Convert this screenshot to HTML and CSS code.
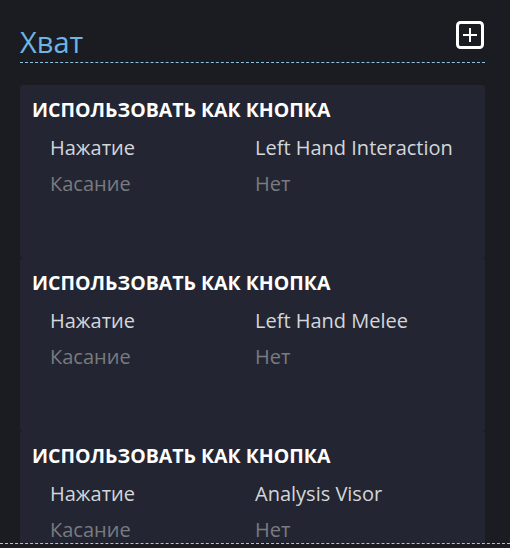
FILE: index.html
```html
<!DOCTYPE html>
<html>
<head>
    <meta http-equiv="Content-Type" content="text/html; charset=utf-8" />
    <title>Хват</title>
    <link rel="stylesheet" href="styles.css">
</head>

<body>
    <div class="frame">
        <section class="panel">
            <header class="panel-head">
                <h1 class="panel-title">Хват</h1>
                <button class="add-btn" title="Добавить">
                    <svg width="30" height="30" viewBox="0 0 30 30">
                        <rect x="2.5" y="2.5" width="25" height="25" rx="3" fill="none" stroke="#fff" stroke-width="3"></rect>
                        <path d="M15 8 V22 M8 15 H22" stroke="#fff" stroke-width="2" fill="none"></path>
                    </svg>
                </button>
            </header>
            <ul class="groups">
                <li class="group">
                    <h2>Использовать как кнопка</h2>
                    <div class="row"><span>Нажатие</span><span>Left Hand Interaction</span></div>
                    <div class="row muted"><span>Касание</span><span>Нет</span></div>
                </li>
                <li class="group">
                    <h2>Использовать как кнопка</h2>
                    <div class="row"><span>Нажатие</span><span>Left Hand Melee</span></div>
                    <div class="row muted"><span>Касание</span><span>Нет</span></div>
                </li>
                <li class="group">
                    <h2>Использовать как кнопка</h2>
                    <div class="row"><span>Нажатие</span><span>Analysis Visor</span></div>
                    <div class="row muted"><span>Касание</span><span>Нет</span></div>
                </li>
            </ul>
        </section>
    </div>
</body>

</html>
```

FILE: styles.css
```css
body {
    margin: 0;
    padding: 0;
    background: #1b1c21;
    font-family: "Open Sans", "Liberation Sans", Arial, sans-serif;
    color: #d3d6db;
}
.frame {
    height: 543px;
    overflow: hidden;
    border-bottom: 1px dashed #9fc9df;
}
.panel {
    padding: 20px 25px 0 20px;
}
.panel-head {
    display: flex;
    justify-content: space-between;
    align-items: flex-end;
    border-bottom: 1px dashed #8ec4e2;
}
.panel-title {
    margin: 0;
    padding-top: 2px;
    font-size: 29px;
    font-weight: normal;
    line-height: 40px;
    color: #6cb5e5;
}
.add-btn {
    margin: 0 0 12px 0;
    padding: 0;
    width: 30px;
    height: 30px;
    border: none;
    background: none;
    cursor: pointer;
}
.add-btn svg {
    display: block;
}
.groups {
    margin: 22px 0 0 0;
    padding: 0;
    list-style: none;
}
.group {
    height: 173px;
    box-sizing: border-box;
    padding: 13px 12px 0 12px;
    background: #232632;
    border-radius: 3px;
}
.group h2 {
    margin: 0;
    font-size: 19.5px;
    line-height: 24px;
    font-weight: bold;
    text-transform: uppercase;
    color: #fff;
}
.row {
    display: grid;
    grid-template-columns: 205px 1fr;
    padding-left: 18px;
    font-size: 20px;
    line-height: 36px;
}
.group h2 + .row {
    margin-top: 8px;
}
.muted {
    color: #797b80;
}
```
